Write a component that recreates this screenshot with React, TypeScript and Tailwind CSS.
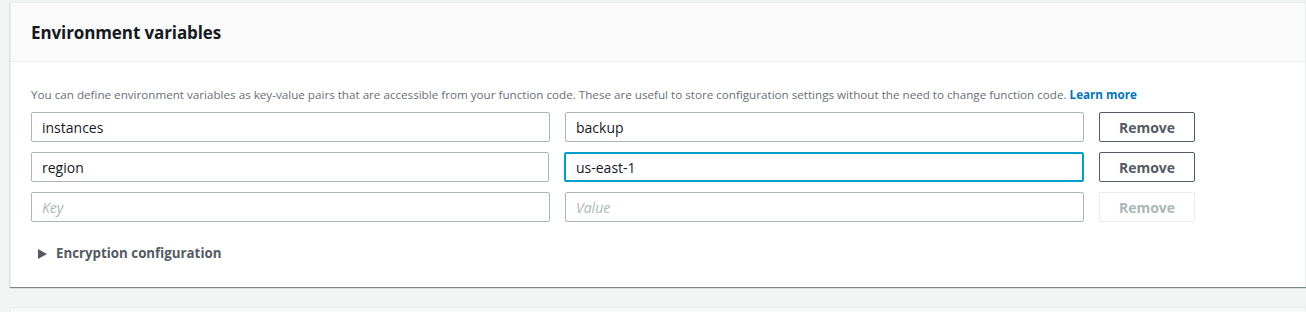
const rows = [
  { key: 'instances', value: 'backup', focused: false },
  { key: 'region', value: 'us-east-1', focused: true },
]

function Field({ value, placeholder, focused }: { value?: string; placeholder?: string; focused?: boolean }) {
  return (
    <div
      className={
        'flex-1 h-[30px] rounded-[2px] flex items-center px-[10px] text-[14px] bg-white ' +
        (focused ? 'border-2 border-[#00a1c9] px-[9px]' : 'border border-[#aab7b8]')
      }
    >
      {value ? (
        <span className="text-[#16191f]">{value}</span>
      ) : (
        <span className="text-[#aab7b8] italic">{placeholder}</span>
      )}
    </div>
  )
}

export default function App() {
  return (
    <div
      className="w-[1306px] h-[312px] bg-[#f2f3f3] overflow-hidden pt-[2px] pl-[10px]"
      style={{ fontFamily: '"Open Sans", "Noto Sans", Arial, sans-serif' }}
    >
      <div className="bg-white border border-[#eaeded] border-b-0 shadow-[0_1px_1px_0_rgba(0,28,36,0.5)] w-[1296px]">
        <div className="bg-[#fafafa] border-b border-[#eaeded] h-[59px] flex items-center px-[20px] pt-[1px]">
          <h2 className="text-[17px] tracking-[-0.1px] font-bold text-[#16191f]">Environment variables</h2>
        </div>
        <div className="px-[20px] pt-[25px] pb-[23px]">
          <p className="text-[11.65px] leading-[16px] text-[#687078]">
            You can define environment variables as key-value pairs that are accessible from your function code. These
            are useful to store configuration settings without the need to change function code.{' '}
            <span className="font-bold text-[#0073bb]">Learn more</span>
          </p>
          <div className="mt-[9px] flex flex-col gap-[10px]">
            {rows.map((r) => (
              <div key={r.key} className="flex items-center gap-[15px] w-[1164px]">
                <Field value={r.key} />
                <Field value={r.value} focused={r.focused} />
                <button className="w-[96px] h-[30px] rounded-[2px] border border-[#545b64] text-[#545b64] text-[14px] font-bold">
                  Remove
                </button>
              </div>
            ))}
            <div className="flex items-center gap-[15px] w-[1164px]">
              <Field placeholder="Key" />
              <Field placeholder="Value" />
              <button className="w-[96px] h-[30px] rounded-[2px] border border-[#eaeded] text-[#aab7b8] text-[14px] font-bold">
                Remove
              </button>
            </div>
          </div>
          <div className="mt-[22px] flex items-center h-[20px] pl-[7px] gap-[9px]">
            <svg width="9" height="10" viewBox="0 0 9 10">
              <path d="M0 0 L9 5 L0 10 Z" fill="#545b64" />
            </svg>
            <span className="text-[13.3px] font-bold text-[#545b64]">Encryption configuration</span>
          </div>
        </div>
      </div>
      <div className="mt-[20px] bg-[#fafafa] border border-[#eaeded] h-[40px] w-[1296px]" />
    </div>
  )
}
